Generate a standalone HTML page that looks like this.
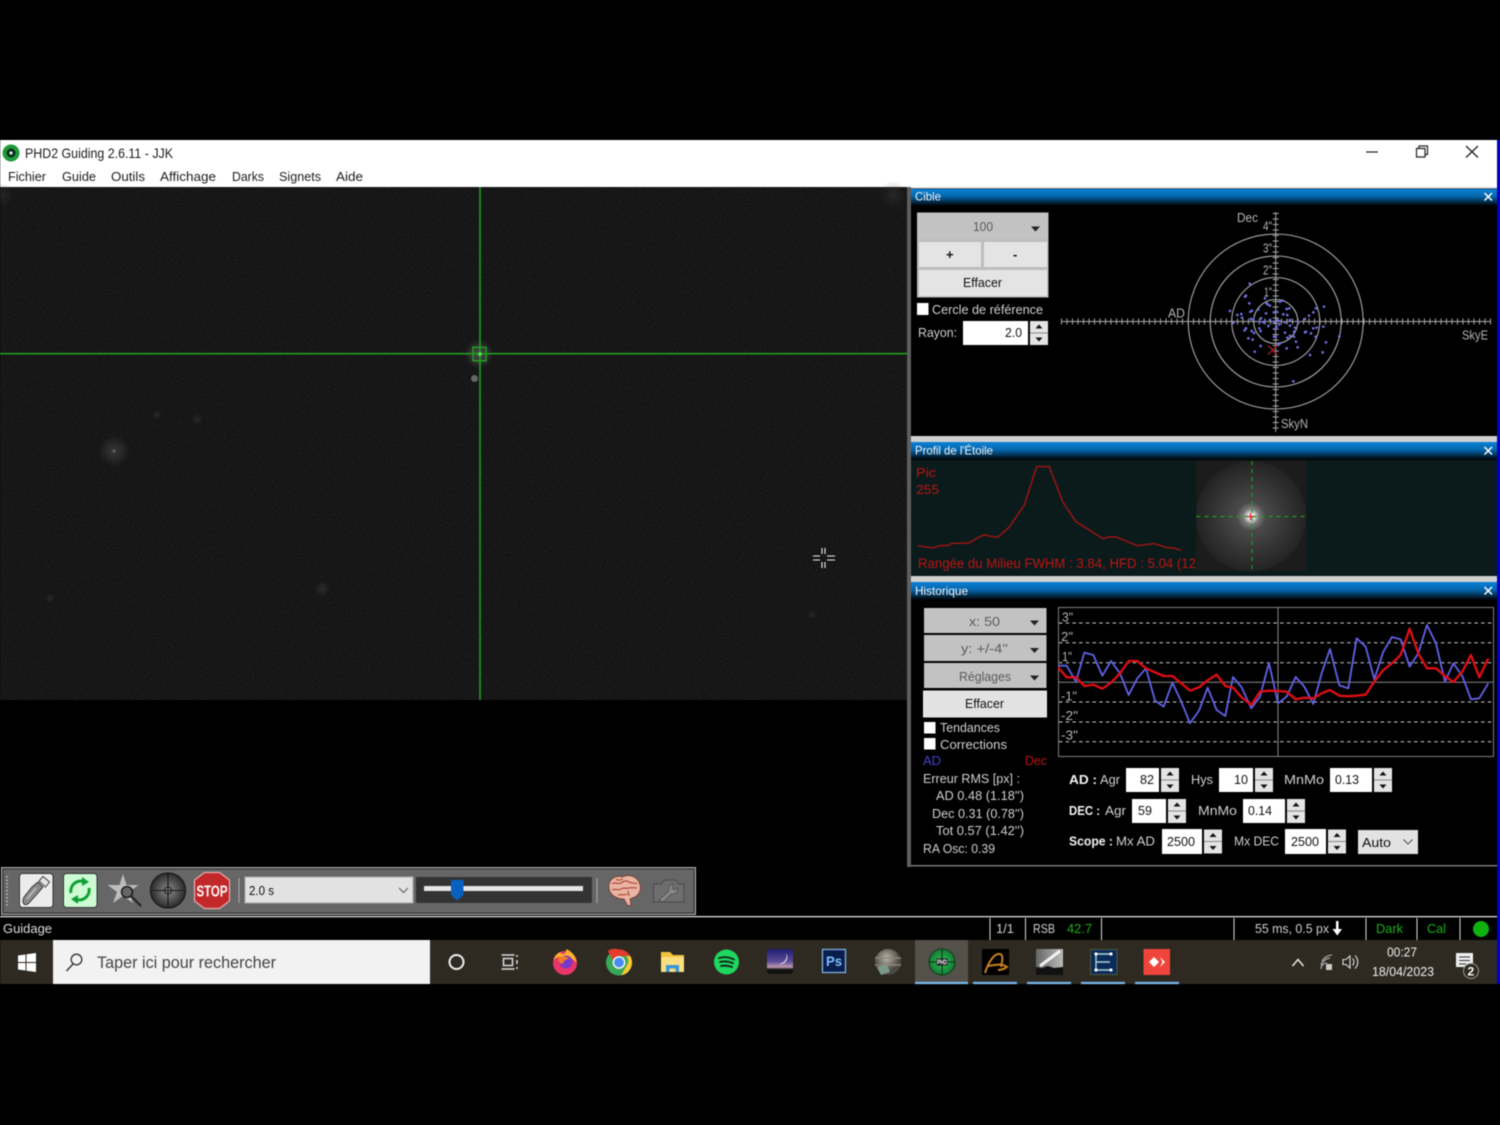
<!DOCTYPE html>
<html lang="fr"><head><meta charset="utf-8"><title>PHD2 Guiding</title>
<style>
html,body{margin:0;padding:0;background:#000;width:1500px;height:1125px;overflow:hidden}
svg{display:block;position:absolute;left:0;top:0;filter:blur(.45px)}
text{font-family:"Liberation Sans",sans-serif;font-size:13px;fill:#d0d0d0}
.d{fill:#111}.g{fill:#5c5c5c}.w{fill:#f2f2f2}.r{fill:#bc1414}.b{font-weight:bold;fill:#f4f4f4}.c{font-size:12px;fill:#f4f4f4}.l{font-size:13px;fill:#b4b4b4}.n{fill:#1c1c1c}.gr{fill:#1cb01c}
</style></head><body>
<svg width="1500" height="1125" viewBox="0 0 1500 1125" xmlns="http://www.w3.org/2000/svg">
<defs>
<linearGradient id="cap" x1="0" y1="0" x2="0" y2="1"><stop offset="0" stop-color="#0a82d8"/><stop offset=".45" stop-color="#0564a8"/><stop offset="1" stop-color="#000"/></linearGradient>
<radialGradient id="glow"><stop offset="0" stop-color="#666" stop-opacity=".8"/><stop offset=".6" stop-color="#444" stop-opacity=".55"/><stop offset="1" stop-color="#333" stop-opacity="0"/></radialGradient>
<radialGradient id="st"><stop offset="0" stop-color="#fff"/><stop offset=".06" stop-color="#e4e4e4"/><stop offset=".14" stop-color="#7c7c7c"/><stop offset=".26" stop-color="#4a4a4a"/><stop offset=".65" stop-color="#343434"/><stop offset="1" stop-color="#232323"/></radialGradient>
<radialGradient id="tg"><stop offset="0" stop-color="#8c8c8c"/><stop offset="1" stop-color="#2a2a2a"/></radialGradient>
<radialGradient id="jup" cx=".45" cy=".35"><stop offset="0" stop-color="#bdb6aa"/><stop offset="1" stop-color="#4a4640"/></radialGradient>
<radialGradient id="ph"><stop offset="0" stop-color="#36c45a"/><stop offset="1" stop-color="#127a34"/></radialGradient>
<linearGradient id="ste" x1="0" y1="0" x2="0" y2="1"><stop offset="0" stop-color="#1e1e70"/><stop offset=".5" stop-color="#5a4a96"/><stop offset=".72" stop-color="#c09ab0"/><stop offset=".82" stop-color="#111"/></linearGradient>
<linearGradient id="cm" x1="0" y1="0" x2="1" y2="0"><stop offset="0" stop-color="#666"/><stop offset="1" stop-color="#bbb"/></linearGradient>
<filter id="nz" x="0" y="0" width="100%" height="100%"><feTurbulence type="fractalNoise" baseFrequency=".9" numOctaves="2" seed="4"/><feColorMatrix values="0 0 0 0 .14  0 0 0 0 .14  0 0 0 0 .14  .5 0 0 0 -.14"/></filter>
<g id="spin"><rect width="18" height="24" fill="#888"/><rect y="0" width="18" height="11.5" fill="#e4e4e4"/><rect y="12.5" width="18" height="11.5" fill="#e4e4e4"/><path d="M9 3.500l3.500 4h-7zM9 20.500l-3.500-4h7z" fill="#111"/></g>
</defs>

<!-- window -->
<rect x="0" y="140" width="1497" height="48" fill="#fff"/>
<rect x="1497" y="140" width="3" height="844" fill="#0000c8"/>
<rect x="0" y="187" width="907" height="513" fill="#0d0d0d"/>
<rect x="0" y="187" width="907" height="513" filter="url(#nz)"/>
<rect x="907" y="187" width="4" height="680" fill="#5e5e5e"/>
<rect x="911" y="187" width="586" height="680" fill="#000"/>

<!-- title -->
<circle cx="11" cy="153" r="8.500" fill="#1d9a3a"/><circle cx="11" cy="153" r="4.500" fill="#0c2a18"/><circle cx="11" cy="153" r="1.600" fill="#cfe"/>
<text class="n" x="25" y="158" style="font-size:14px" textLength="148" lengthAdjust="spacingAndGlyphs">PHD2 Guiding 2.6.11 - JJK</text>
<path d="M1366 152h12" stroke="#222" stroke-width="1.200"/>
<path d="M1416.500 148.500h8.500v8.500h-8.500zM1419 148.500v-2.500h8.500v8.500h-2.500" fill="none" stroke="#222" stroke-width="1.200"/>
<path d="M1466 146l12 11.500M1478 146l-12 11.500" stroke="#222" stroke-width="1.300"/>
<g>
<text class="n" x="8" y="181" textLength="38" lengthAdjust="spacingAndGlyphs">Fichier</text>
<text class="n" x="62" y="181" textLength="34" lengthAdjust="spacingAndGlyphs">Guide</text>
<text class="n" x="111" y="181" textLength="34" lengthAdjust="spacingAndGlyphs">Outils</text>
<text class="n" x="160" y="181" textLength="56" lengthAdjust="spacingAndGlyphs">Affichage</text>
<text class="n" x="232" y="181" textLength="32" lengthAdjust="spacingAndGlyphs">Darks</text>
<text class="n" x="279" y="181" textLength="42" lengthAdjust="spacingAndGlyphs">Signets</text>
<text class="n" x="336" y="181" textLength="27" lengthAdjust="spacingAndGlyphs">Aide</text>
</g>

<!-- camera view stars -->
<circle cx="479" cy="354" r="15" fill="url(#glow)" opacity=".9"/>
<circle cx="474.500" cy="378.500" r="3.500" fill="#888" opacity=".7"/>
<circle cx="114" cy="451" r="16" fill="url(#glow)" opacity=".55"/><circle cx="114" cy="451" r="1.400" fill="#666"/>
<circle cx="322" cy="589" r="8" fill="url(#glow)" opacity=".35"/>
<circle cx="157" cy="415" r="5" fill="url(#glow)" opacity=".3"/>
<circle cx="197" cy="419" r="6" fill="url(#glow)" opacity=".3"/>
<circle cx="50" cy="598" r="5" fill="url(#glow)" opacity=".3"/>
<circle cx="812" cy="615" r="5" fill="url(#glow)" opacity=".25"/>
<circle cx="893" cy="195" r="14" fill="url(#glow)" opacity=".25"/>
<circle cx="2" cy="195" r="12" fill="url(#glow)" opacity=".25"/>
<path d="M0 353.700H907M480 187V700" stroke="#1f9c1f" stroke-width="1.600"/>
<rect x="473" y="347.300" width="13" height="13.500" fill="none" stroke="#1f9c1f" stroke-width="1.600"/>
<circle cx="480" cy="354" r="1.800" fill="#4fe84f"/>
<path d="M822 548v6M825 548v6M822 562v6M825 562v6M813 556h7M813 560h7M827 556h8M827 560h8" stroke="#eee" stroke-width="1.100"/>

<!-- panel separators -->
<rect x="911" y="436" width="586" height="6" fill="#d0d0d0"/>
<rect x="911" y="576" width="586" height="6" fill="#d0d0d0"/>
<rect x="911" y="187" width="586" height="1.500" fill="#ddd"/>
<rect x="911" y="865" width="586" height="1.500" fill="#777"/>

<!-- captions -->
<rect x="911" y="189" width="586" height="17" fill="url(#cap)"/>
<rect x="911" y="442" width="586" height="18" fill="url(#cap)"/>
<rect x="911" y="582" width="586" height="18" fill="url(#cap)"/>
<text class="c" x="915" y="200.500" textLength="26" lengthAdjust="spacingAndGlyphs">Cible</text>
<text class="c" x="915" y="454.500" textLength="78" lengthAdjust="spacingAndGlyphs">Profil de l'Étoile</text>
<text class="c" x="915" y="595" textLength="53" lengthAdjust="spacingAndGlyphs">Historique</text>
<path d="M1484.500 193l7.500 7.500M1492 193l-7.500 7.500M1484.500 447l7.500 7.500M1492 447l-7.500 7.500M1484.500 587l7.500 7.500M1492 587l-7.500 7.500" stroke="#fff" stroke-width="1.500"/>

<!-- Cible left -->
<rect x="917" y="212.500" width="131.500" height="85" fill="#bdbdbd"/>
<rect x="918" y="213" width="129" height="26" fill="#c2c2c2"/>
<rect x="919" y="242" width="62" height="25" fill="#e4e4e4"/>
<rect x="984" y="242" width="63" height="25" fill="#e4e4e4"/>
<rect x="919" y="270" width="128" height="26" fill="#e4e4e4"/>
<text class="g" x="973" y="231" textLength="20" lengthAdjust="spacingAndGlyphs">100</text>
<path d="M1031 226.500h9l-4.500 5z" fill="#222"/>
<text class="d" x="946" y="259" style="font-weight:bold">+</text>
<text class="d" x="1013" y="259" style="font-weight:bold">-</text>
<text class="d" x="963" y="287" textLength="39" lengthAdjust="spacingAndGlyphs">Effacer</text>
<rect x="917" y="303" width="11.500" height="12" fill="#fff"/>
<text x="932" y="314" textLength="111" lengthAdjust="spacingAndGlyphs">Cercle de référence</text>
<text x="918" y="337" textLength="39" lengthAdjust="spacingAndGlyphs">Rayon:</text>
<rect x="963" y="321" width="65" height="24" fill="#fff"/>
<text class="d" x="1005" y="337" textLength="17" lengthAdjust="spacingAndGlyphs">2.0</text>
<use href="#spin" x="1030" y="321"/>

<!-- Target -->
<g fill="none" stroke="#a8a8a8" stroke-width="1.100">
<circle cx="1275.700" cy="321.500" r="22"/><circle cx="1275.700" cy="321.500" r="44"/><circle cx="1275.700" cy="321.500" r="65.500"/><circle cx="1275.700" cy="321.500" r="87.500"/>
</g>
<path d="M1061 321.500H1491M1275.700 212V432" stroke="#a8a8a8" stroke-width="1"/>
<path d="M1061 321.500H1491" stroke="#a8a8a8" stroke-width="6" stroke-dasharray="1 4.500"/>
<path d="M1275.700 212V432" stroke="#a8a8a8" stroke-width="6" stroke-dasharray="1 4.500" stroke-dashoffset="-1"/>
<text class="l" x="1237" y="222" textLength="21" lengthAdjust="spacingAndGlyphs">Dec</text>
<text class="l" x="1263" y="230.500" textLength="9" lengthAdjust="spacingAndGlyphs">4"</text>
<text class="l" x="1263" y="252.500" textLength="9" lengthAdjust="spacingAndGlyphs">3"</text>
<text class="l" x="1263" y="274.500" textLength="9" lengthAdjust="spacingAndGlyphs">2"</text>
<text class="l" x="1264" y="296.500" textLength="8" lengthAdjust="spacingAndGlyphs">1"</text>
<text class="l" x="1168" y="317.500" textLength="17" lengthAdjust="spacingAndGlyphs">AD</text>
<text class="l" x="1462" y="339.500" textLength="26" lengthAdjust="spacingAndGlyphs">SkyE</text>
<text class="l" x="1281" y="428" textLength="27" lengthAdjust="spacingAndGlyphs">SkyN</text>
<g transform="translate(1170 205) scale(.3333)">
<path fill="none" stroke="#7070e4" stroke-width="8" stroke-linecap="round" d="M239 236h0M225 275h0M228 272h0M238 295h0M180 318h0M202 330h0M214 327h0M216 338h0M190 354h0M241 320h0M246 317h0M265 313h0M243 342h0M250 344h0M273 340h0M283 350h0M288 325h0M285 280h0M293 298h0M300 302h0M290 295h0M330 290h0M338 287h0M320 320h0M312 322h0M350 312h0M358 310h0M340 328h0M352 330h0M360 345h0M345 352h0M328 348h0M322 345h0M385 352h0M405 342h0M417 332h0M430 322h0M438 310h0M462 305h0M440 368h0M460 365h0M430 370h0M405 382h0M408 380h0M423 385h0M437 395h0M468 412h0M508 394h0M458 442h0M420 450h0M383 427h0M378 410h0M372 395h0M360 392h0M352 398h0M350 430h0M330 415h0M325 420h0M320 365h0M315 372h0M318 395h0M345 383h0M375 368h0M372 380h0M228 370h0M224 376h0M245 378h0M252 384h0M268 370h0M272 378h0M235 400h0M248 404h0M272 423h0M254 440h0M295 363h0M280 352h0M268 350h0M315 440h0M370 529h0M312 395h0M300 345h0M312 350h0M328 358h0M360 362h0"/>
<path d="M294 421l28 28M322 421l-28 28" stroke="#a81c1c" stroke-width="4" fill="none"/>
</g>

<!-- Profile -->
<rect x="911" y="460" width="586" height="116" fill="#0b1b1b"/>
<text class="r" x="916" y="477" textLength="20" lengthAdjust="spacingAndGlyphs">Pic</text>
<text class="r" x="916" y="494" textLength="23" lengthAdjust="spacingAndGlyphs">255</text>
<path transform="translate(900 440) scale(.3827 .3333)" fill="none" stroke="#9a1414" stroke-width="1.500" d="M47 317L62 320L85 324L105 317L128 316L135 310L180 309L205 292L222 284L232 288L255 292L285 262L325 195L357 80L390 80L425 185L460 245L500 274L530 296L545 291L565 291L620 317L665 311L695 322L715 324L733 330" style="vector-effect:non-scaling-stroke"/>
<text class="r" x="918" y="568" textLength="278" lengthAdjust="spacingAndGlyphs" style="font-size:14px">Rangée du Milieu FWHM : 3.84, HFD : 5.04 (12</text>
<rect x="1196.500" y="460.500" width="110" height="110" fill="#1c1c1c"/>
<ellipse cx="1251" cy="516.500" rx="55" ry="55" fill="url(#st)"/>
<path d="M1196.500 516.500H1306M1252 461V571" stroke="#1c9a1c" stroke-width="1.200" stroke-dasharray="4 4"/>
<path d="M1247 516.500h7M1250.500 513v7" stroke="#e81c30" stroke-width="1.200"/>

<!-- History left -->
<rect x="924" y="608" width="122.500" height="25" fill="#c2c2c2"/>
<rect x="924" y="635" width="122.500" height="26" fill="#c2c2c2"/>
<rect x="924" y="663" width="122.500" height="25" fill="#c2c2c2"/>
<rect x="923" y="690.500" width="124" height="27" fill="#fff" opacity=".9"/>
<rect x="925" y="692" width="120.500" height="24" fill="#e2e2e2"/>
<text class="g" x="969" y="626" textLength="31" lengthAdjust="spacingAndGlyphs">x:  50</text>
<text class="g" x="961" y="653" textLength="47" lengthAdjust="spacingAndGlyphs">y: +/-4''</text>
<text class="g" x="959" y="681" textLength="52" lengthAdjust="spacingAndGlyphs">Réglages</text>
<text class="d" x="965" y="708" textLength="39" lengthAdjust="spacingAndGlyphs">Effacer</text>
<path d="M1030 620.500h9l-4.500 5zM1030 648h9l-4.500 5zM1030 675.500h9l-4.500 5z" fill="#222"/>
<rect x="924" y="722" width="11.500" height="11.500" fill="#fff"/>
<rect x="924" y="738" width="11.500" height="11.500" fill="#fff"/>
<text x="940" y="732" textLength="60" lengthAdjust="spacingAndGlyphs">Tendances</text>
<text x="940" y="749" textLength="67" lengthAdjust="spacingAndGlyphs">Corrections</text>
<text x="923" y="765" textLength="18" lengthAdjust="spacingAndGlyphs" style="fill:#4343d0">AD</text>
<text class="r" x="1025" y="765" textLength="22" lengthAdjust="spacingAndGlyphs">Dec</text>
<text x="923" y="783" textLength="97" lengthAdjust="spacingAndGlyphs">Erreur RMS [px] :</text>
<text x="936" y="800" textLength="88" lengthAdjust="spacingAndGlyphs">AD  0.48 (1.18'')</text>
<text x="932" y="818" textLength="92" lengthAdjust="spacingAndGlyphs">Dec  0.31 (0.78'')</text>
<text x="936" y="835" textLength="88" lengthAdjust="spacingAndGlyphs">Tot  0.57 (1.42'')</text>
<text x="923" y="853" textLength="72" lengthAdjust="spacingAndGlyphs">RA Osc: 0.39</text>

<!-- Graph -->
<rect x="1058.500" y="607.500" width="435" height="149" fill="#000" stroke="#777" stroke-width="1.100"/>
<path d="M1059 682.300H1493M1278 607.500V756.500" stroke="#8a8a8a" stroke-width="1"/>
<path d="M1059 623H1493M1059 642.700H1493M1059 662.700H1493M1059 702H1493M1059 722H1493M1059 741.700H1493" stroke="#ccc" stroke-width="1" stroke-dasharray="3.500 3.200"/>
<text class="l" x="1062" y="621.500" textLength="11" lengthAdjust="spacingAndGlyphs">3"</text>
<text class="l" x="1061" y="641" textLength="12" lengthAdjust="spacingAndGlyphs">2"</text>
<text class="l" x="1062" y="661" textLength="10" lengthAdjust="spacingAndGlyphs">1"</text>
<text class="l" x="1061" y="700.500" textLength="16" lengthAdjust="spacingAndGlyphs">-1"</text>
<text class="l" x="1061" y="720" textLength="17" lengthAdjust="spacingAndGlyphs">-2"</text>
<text class="l" x="1061" y="739.500" textLength="17" lengthAdjust="spacingAndGlyphs">-3"</text>
<g transform="translate(1050 600) scale(.3333)" fill="none" stroke-linejoin="round">
<polyline stroke="#6060e4" stroke-width="5.500" points="25,197 50,197 78,245 103,158 130,165 157,227 183,183 210,220 236,285 262,235 288,205 315,302 341,320 367,248 394,305 420,370 447,332 473,263 500,330 526,348 549,231 575,262 604,325 630,290 657,189 684,310 710,290 737,231 763,260 790,312 815,220 840,147 868,256 895,265 920,115 947,140 973,238 1000,155 1026,111 1052,118 1079,200 1105,160 1131,75 1158,130 1185,245 1210,190 1237,228 1263,298 1288,295 1315,250"/>
<polyline stroke="#e00d14" stroke-width="7" points="25,203 50,232 78,232 103,258 130,254 157,266 183,248 210,220 236,183 262,183 288,205 315,217 341,228 367,228 394,250 420,272 447,262 473,241 500,224 526,258 549,263 575,292 604,315 630,275 657,272 684,273 710,275 737,298 763,293 790,295 815,280 840,270 868,287 895,289 920,287 947,284 973,245 1000,210 1026,190 1052,165 1079,86 1105,160 1131,205 1158,205 1185,228 1210,246 1237,215 1263,165 1288,232 1315,175"/>
</g>

<!-- Params -->
<text class="b" x="1069" y="784" textLength="28" lengthAdjust="spacingAndGlyphs">AD :</text>
<text x="1100" y="784" textLength="20" lengthAdjust="spacingAndGlyphs">Agr</text>
<rect x="1126" y="768" width="33" height="24" fill="#fff"/>
<text class="d" x="1140" y="784" textLength="14" lengthAdjust="spacingAndGlyphs">82</text>
<use href="#spin" x="1161" y="768"/>
<text x="1191" y="784" textLength="22" lengthAdjust="spacingAndGlyphs">Hys</text>
<rect x="1219" y="768" width="34" height="24" fill="#fff"/>
<text class="d" x="1234" y="784" textLength="14" lengthAdjust="spacingAndGlyphs">10</text>
<use href="#spin" x="1255" y="768"/>
<text x="1284" y="784" textLength="40" lengthAdjust="spacingAndGlyphs">MnMo</text>
<rect x="1330" y="768" width="42" height="24" fill="#fff"/>
<text class="d" x="1335" y="784" textLength="24" lengthAdjust="spacingAndGlyphs">0.13</text>
<use href="#spin" x="1374" y="768"/>

<text class="b" x="1069" y="815" textLength="31" lengthAdjust="spacingAndGlyphs">DEC :</text>
<text x="1105" y="815" textLength="21" lengthAdjust="spacingAndGlyphs">Agr</text>
<rect x="1132" y="799" width="34" height="24" fill="#fff"/>
<text class="d" x="1138" y="815" textLength="14" lengthAdjust="spacingAndGlyphs">59</text>
<use href="#spin" x="1168" y="799"/>
<text x="1198" y="815" textLength="39" lengthAdjust="spacingAndGlyphs">MnMo</text>
<rect x="1243" y="799" width="42" height="24" fill="#fff"/>
<text class="d" x="1248" y="815" textLength="24" lengthAdjust="spacingAndGlyphs">0.14</text>
<use href="#spin" x="1287" y="799"/>

<text class="b" x="1069" y="845.500" textLength="44" lengthAdjust="spacingAndGlyphs">Scope :</text>
<text x="1116" y="845.500" textLength="39" lengthAdjust="spacingAndGlyphs">Mx AD</text>
<rect x="1162" y="829" width="40" height="25" fill="#fff"/>
<text class="d" x="1167" y="846" textLength="28" lengthAdjust="spacingAndGlyphs">2500</text>
<use href="#spin" x="1204" y="829.500"/>
<text x="1234" y="845.500" textLength="45" lengthAdjust="spacingAndGlyphs">Mx DEC</text>
<rect x="1285" y="829" width="41" height="25" fill="#fff"/>
<text class="d" x="1291" y="846" textLength="28" lengthAdjust="spacingAndGlyphs">2500</text>
<use href="#spin" x="1328" y="829.500"/>
<rect x="1358" y="830" width="60" height="24" fill="#e2e2e2"/>
<text class="d" x="1362" y="847" textLength="29" lengthAdjust="spacingAndGlyphs">Auto</text>
<path d="M1403.500 839.500l4.500 4.500 4.500-4.500" fill="none" stroke="#555" stroke-width="1.100"/>

<!-- Toolbar -->
<rect x="1.500" y="867.500" width="694" height="47" fill="#666" stroke="#aaa" stroke-width="1"/>
<rect x="3" y="869" width="691" height="44" fill="none" stroke="#333" stroke-width="1"/>
<path d="M7 876V907" stroke="#c8c8c8" stroke-width="1.500" stroke-dasharray="1.500 2"/>
<rect x="19.500" y="873.500" width="33.500" height="34" rx="3" fill="#ececec" stroke="#333"/>
<path d="M24 904c-2-2-1-5 0-7l8-10 6-5 5 5-5 6-9 10c-2 2-4 2-5 1z" fill="#8a8a8a" stroke="#333" stroke-width=".9"/>
<path d="M39 881l4-4.500 6.500 5.500-4 5z" fill="#e4e4e4" stroke="#444" stroke-width="1"/>
<path d="M27 899l9-11" stroke="#ccc" stroke-width="1.200"/>
<rect x="63.500" y="873.500" width="33.500" height="34" rx="3" fill="#cdfcd4" stroke="#333"/>
<path d="M71 893a10 10 0 0 1 14-11" fill="none" stroke="#0fa032" stroke-width="3"/><path d="M82 877l7 5-7 4z" fill="#0fa032"/>
<path d="M89 888a10 10 0 0 1-14 11" fill="none" stroke="#0fa032" stroke-width="3"/><path d="M78 904l-7-5 7-4z" fill="#0fa032"/>
<path d="M123 874l3.500 11 12 0-9.500 7 4 11-10-7-10 7 4-11-9.500-7 12 0z" fill="#bdbdbd"/>
<circle cx="127" cy="892" r="5.500" fill="#666" stroke="#111" stroke-width="1.300"/>
<path d="M131 896l10 10" stroke="#222" stroke-width="2"/>
<circle cx="168" cy="890.500" r="17.500" fill="url(#tg)" stroke="#1a1a1a" stroke-width="1.300"/>
<circle cx="168" cy="890.500" r="3.500" fill="none" stroke="#1a1a1a"/>
<path d="M150.500 890.500H186M168 873V908" stroke="#1a1a1a" stroke-width="1.100"/>
<path d="M204.500 872.500h15l10 7.500v21l-10 7.500h-15l-10-7.500v-21z" fill="#c2282a" stroke="#e8b0b0" stroke-width="1.200"/>
<text x="196.500" y="896.500" textLength="31" lengthAdjust="spacingAndGlyphs" style="font-size:16px;font-weight:bold;fill:#fff">STOP</text>
<path d="M239 878V903M597 878V903" stroke="#aaa" stroke-width="1"/>
<rect x="245" y="877" width="168" height="26" fill="#e2e2e2" stroke="#aaa"/>
<text class="d" x="249" y="895" textLength="25" lengthAdjust="spacingAndGlyphs">2.0 s</text>
<path d="M399 888l4.500 4.500 4.500-4.500" fill="none" stroke="#666" stroke-width="1.200"/>
<rect x="416" y="877" width="176" height="26" fill="#333"/>
<rect x="424" y="886" width="159" height="5" fill="#e6e6e6"/>
<path d="M451 880h12.500v15l-6.250 5.500-6.250-5.500z" fill="#0a60c0"/>
<path d="M609 888c-1-8 6-13 13-11 6-3 14-1 17 5 3 6 1 12-4 15-2 1-4 1-5 2l1 6-3 1-4-7c-6 0-14-3-15-11z" fill="#eab4a4" stroke="#7a3428" stroke-width=".8"/>
<path d="M612 884c3-3 6 1 9-1s5-3 8-1 6 0 8 2M612 890c3-2 6 1 9-1s6 0 8-1 5 0 8 0M616 879c2 2 4 1 7 0M618 895c3-1 6 1 9-1M628 891l1 5" fill="none" stroke="#b4503e" stroke-width="1.300"/>
<path d="M653.500 884h8l2-4h12l3 4h5.500v18h-30.500z" fill="#6e6e6e" stroke="#4a4a4a" stroke-width="1"/>
<path d="M659 900l10-9c-1-4 1-7 5-7l-2 4 2 2 4-2c0 4-3 7-7 6l-8 8z" fill="#888" stroke="#4a4a4a" stroke-width=".7"/>

<!-- Status -->
<rect x="0" y="916" width="1497" height="1.300" fill="#ddd"/>
<text x="3" y="933" textLength="49" lengthAdjust="spacingAndGlyphs" style="fill:#ddd">Guidage</text>
<path d="M990 918V940M1025.500 918V940M1101.500 918V940M1234 918V940M1366 918V940M1417 918V940M1460 918V940" stroke="#ddd" stroke-width="1"/>
<text x="996" y="933" textLength="18" lengthAdjust="spacingAndGlyphs">1/1</text>
<text x="1033" y="933" textLength="22" lengthAdjust="spacingAndGlyphs">RSB</text>
<text class="gr" x="1067" y="933" textLength="25" lengthAdjust="spacingAndGlyphs">42.7</text>
<text x="1255" y="933" textLength="74" lengthAdjust="spacingAndGlyphs">55 ms, 0.5 px</text>
<path d="M1336 921h2.500v8h3.500l-4.700 6.500-4.800-6.500h3.500z" fill="#fff"/>
<text class="gr" x="1376" y="933" textLength="27" lengthAdjust="spacingAndGlyphs">Dark</text>
<text class="gr" x="1427" y="933" textLength="19" lengthAdjust="spacingAndGlyphs">Cal</text>
<circle cx="1481" cy="929" r="8" fill="#0fb00f"/>

<!-- Taskbar -->
<rect x="0" y="940" width="1497" height="44" fill="#2e2a22"/>
<path d="M18 955.500l7.500-1v7.500H18zM26.500 954.300l9.500-1.300v9h-9.500zM18 963h7.500v7.500l-7.500-1zM26.500 963H36v9l-9.500-1.300z" fill="#fff"/>
<rect x="53" y="940" width="377" height="44" fill="#f2f2f2"/>
<circle cx="76.500" cy="959.500" r="5.300" fill="none" stroke="#333" stroke-width="1.300"/><path d="M73 964l-6.500 7" stroke="#333" stroke-width="1.400"/>
<text x="97" y="968" textLength="179" lengthAdjust="spacingAndGlyphs" style="font-size:17px;fill:#444">Taper ici pour rechercher</text>
<circle cx="456.500" cy="962" r="7" fill="none" stroke="#eee" stroke-width="2"/>
<path d="M501.500 955h13M501.500 969h13M503.500 958.500h9v7h-9zM517 955v2M517 960v4M517 967v2" fill="none" stroke="#ddd" stroke-width="1.500"/>
<!-- firefox -->
<circle cx="565" cy="963" r="12" fill="#e8366a"/>
<path d="M553.500 960c1-5 5-7 7-8 0 2 2 3 5 1 0-1 1-3 1-4 6 3 10 8 10 14-4-7-18-9-23-3z" fill="#fdb22a"/>
<circle cx="566" cy="962" r="6.500" fill="#7b37c8"/><path d="M558 958c4-3 9-2 11 1-3 0-6 2-6 5-3 0-5-3-5-6z" fill="#f07a28"/>
<!-- chrome -->
<circle cx="619" cy="962.500" r="13" fill="#3aa757"/>
<path d="M619 949.500a13 13 0 0 1 11.300 6.500H619a6.500 6.500 0 0 0-6 4l-5.300-9a13 13 0 0 1 11.300-1.500z" fill="#e33b2e"/>
<path d="M630.300 956a13 13 0 0 1-9 19.300l5.500-10a6.500 6.500 0 0 0-1-9.300z" fill="#fcc934"/>
<circle cx="619" cy="962.500" r="6.300" fill="#fff"/><circle cx="619" cy="962.500" r="5" fill="#4c8bf5"/>
<!-- folder -->
<path d="M661 952h9l3 3h11v17h-23z" fill="#f3c23c"/><rect x="661" y="957" width="23" height="15" fill="#fbdf7e"/><path d="M666 972v-7h13v7h-3.500v-3.500h-6v3.500z" fill="#3a96dd"/>
<!-- spotify -->
<circle cx="726.500" cy="962" r="12.500" fill="#1ed760"/>
<path d="M719 958c5-1.500 10-1 15 1.500M720 962c4.500-1 8.500-.7 13 1.300M721 966c4-.8 7-.5 11 1" fill="none" stroke="#142818" stroke-width="1.900" stroke-linecap="round"/>
<!-- stellarium -->
<rect x="767" y="949" width="26" height="25" rx="3" fill="url(#ste)"/>
<path d="M786 953a7 7 0 0 1-7 11 8 8 0 0 0 7-11z" fill="#eee"/>
<!-- Ps -->
<rect x="822.500" y="949.500" width="23" height="23" fill="#0a1e4e" stroke="#7fb0e0" stroke-width="1.300"/>
<text x="826" y="966" textLength="16" lengthAdjust="spacingAndGlyphs" style="font-size:14px;font-weight:bold;fill:#7fc0ff">Ps</text>
<!-- jupiter -->
<circle cx="888" cy="962" r="13" fill="url(#jup)"/><path d="M875 958h26M875 965h26" stroke="#8a857a" stroke-width="1.500"/><path d="M877 967l10-3 3 8-9 3z" fill="#7a9a8a"/>
<!-- active -->
<rect x="915" y="940" width="53" height="42" fill="#54514a"/>
<path d="M915 983h53M973 983h44M1027 983h44M1081 983h44M1135 983h44" stroke="#7ab8ea" stroke-width="2.200"/>
<circle cx="942" cy="962" r="13" fill="url(#ph)" stroke="#0c3a1a" stroke-width="1"/>
<path d="M929 962h26M942 949v26" stroke="#0c3a1a" stroke-width="1.200"/>
<rect x="936.500" y="958.500" width="11" height="7" fill="#111"/>
<text x="937" y="964.500" textLength="10" lengthAdjust="spacingAndGlyphs" style="font-size:7px;font-weight:bold;fill:#fff">PHD</text>
<!-- orange arc -->
<rect x="982" y="949" width="27" height="26" fill="#000"/>
<path d="M985 973c3-10 9-20 15-19 4 1 2 8 1 13M988 966c6-1 14-3 19 1-3 2-6 3-9 3" fill="none" stroke="#c8801c" stroke-width="2"/>
<!-- comet -->
<rect x="1036" y="949" width="27" height="26" fill="url(#cm)"/>
<path d="M1036 975v-8l6 1 6-2 6 2 9-1v8z" fill="#111"/>
<path d="M1040 966l20-15" stroke="#f2f2f2" stroke-width="3"/>
<!-- E -->
<rect x="1090.500" y="949.500" width="26.500" height="25" fill="#0c2a5c" stroke="#4a5c38"/>
<path d="M1096 954h15M1096 962h14M1096 970h15M1096 954v16" stroke="#a8d8d0" stroke-width="1.400" fill="none"/>
<circle cx="1096" cy="954" r="1.600" fill="#fff"/><circle cx="1111" cy="954" r="1.600" fill="#fff"/><circle cx="1096" cy="970" r="1.600" fill="#fff"/><circle cx="1111" cy="970" r="1.600" fill="#fff"/>
<!-- anydesk -->
<rect x="1143.500" y="949" width="26.500" height="26" fill="#ef443b"/>
<path d="M1154 957l5 5-5 5-5-5z" fill="#fff"/><path d="M1160 957l5 5-5 5 2.500-5z" fill="#fff"/>
<!-- tray -->
<path d="M1292.500 966l5.500-6.500 5.500 6.500" fill="none" stroke="#eee" stroke-width="1.400"/>
<path d="M1321 969a6 6 0 0 1 6-6M1321 965a11 11 0 0 1 9-7M1322 961a13 13 0 0 1 10-6" fill="none" stroke="#bbb" stroke-width="1.100"/><path d="M1326 964h6v6h-6z" fill="#ccc"/>
<path d="M1343 959.500h3l4-3.500v12l-4-3.500h-3zM1352.500 958.500a5 5 0 0 1 0 7M1355 955.500a9 9 0 0 1 0 13" fill="none" stroke="#ddd" stroke-width="1.100"/>
<text class="w" x="1387" y="956.500" textLength="30" lengthAdjust="spacingAndGlyphs" style="fill:#eee">00:27</text>
<text class="w" x="1372" y="976" textLength="62" lengthAdjust="spacingAndGlyphs" style="fill:#eee">18/04/2023</text>
<path d="M1456 953h17v14h-5l-4 4v-4h-8z" fill="#eee"/><path d="M1459 957h11M1459 960.500h11M1459 964h7" stroke="#333" stroke-width="1"/>
<circle cx="1471" cy="971" r="7.500" fill="#2e2a22" stroke="#999" stroke-width="1"/>
<text x="1467.500" y="975.500" style="font-size:12px;fill:#fff;font-weight:bold">2</text>
</svg>
</body></html>
